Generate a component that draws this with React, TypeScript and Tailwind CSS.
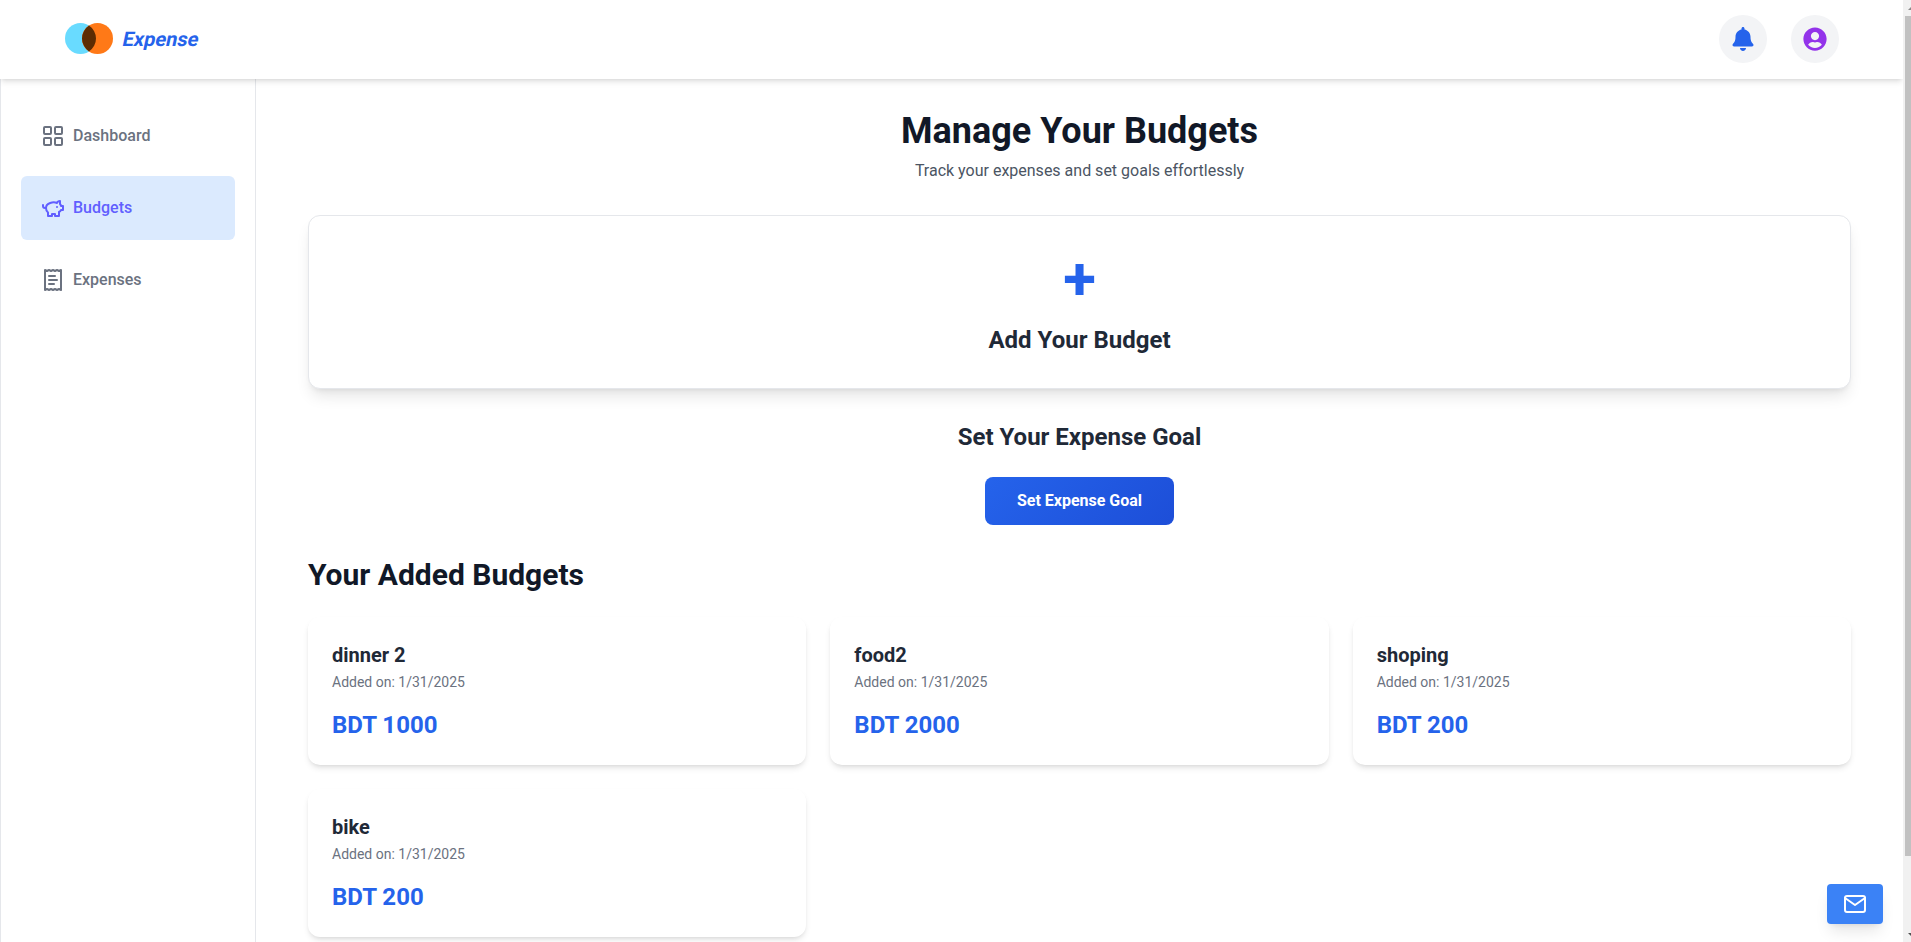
import type { ReactNode } from "react";
import { FiMail } from "react-icons/fi";
import { FaBell, FaUserCircle } from "react-icons/fa";

const budgets = [
  { name: "dinner 2", date: "1/31/2025", amount: 1000 },
  { name: "food2", date: "1/31/2025", amount: 2000 },
  { name: "shoping", date: "1/31/2025", amount: 200 },
  { name: "bike", date: "1/31/2025", amount: 200 },
];

function LineIcon({ children }: { children: ReactNode }) {
  return (
    <svg
      width="24"
      height="24"
      viewBox="0 0 24 24"
      fill="none"
      stroke="currentColor"
      strokeWidth="2"
      strokeLinecap="round"
      strokeLinejoin="round"
    >
      {children}
    </svg>
  );
}

const menu = [
  {
    label: "Dashboard",
    active: false,
    icon: (
      <LineIcon>
        <rect width="7" height="7" x="3" y="3" rx="1" />
        <rect width="7" height="7" x="14" y="3" rx="1" />
        <rect width="7" height="7" x="14" y="14" rx="1" />
        <rect width="7" height="7" x="3" y="14" rx="1" />
      </LineIcon>
    ),
  },
  {
    label: "Budgets",
    active: true,
    icon: (
      <LineIcon>
        <path d="M19 5c-1.5 0-2.8 1.4-3 2-3.5-1.5-11-.3-11 5 0 1.8 0 3 2 4.5V20h4v-2h3v2h4v-4c1-.5 1.7-1 2-2h2v-4h-2c0-1-.5-1.5-1-2V5z" />
        <path d="M2 9v1c0 1.1.9 2 2 2h1" />
        <path d="M16 11h.01" />
      </LineIcon>
    ),
  },
  {
    label: "Expenses",
    active: false,
    icon: (
      <LineIcon>
        <path d="M4 2v20l2-1 2 1 2-1 2 1 2-1 2 1 2-1 2 1V2l-2 1-2-1-2 1-2-1-2 1-2-1-2 1Z" />
        <path d="M14 8H8" />
        <path d="M16 12H8" />
        <path d="M13 16H8" />
      </LineIcon>
    ),
  },
];

function Header() {
  return (
    <header className="relative z-10 flex h-[79px] shrink-0 items-start justify-between bg-white px-16 pt-[15px] shadow-md">
      <div className="flex h-12 items-center gap-[9px]">
        <svg width="50" height="31" viewBox="0 0 50 31" className="mb-px">
          <circle cx="16.5" cy="15.5" r="15.5" fill="#69dbff" />
          <circle cx="33.5" cy="15.5" r="15.5" fill="#ff7917" />
          <path d="M25 2.54a15.5 15.5 0 0 1 0 25.92a15.5 15.5 0 0 1 0-25.92z" fill="#5d2c02" />
        </svg>
        <span className="inline-block -skew-x-12 text-xl font-bold text-[#2563eb]">Expense</span>
      </div>
      <div className="flex gap-6">
        <button className="flex size-12 items-center justify-center rounded-full bg-gray-100 text-2xl text-[#2563eb]">
          <FaBell />
        </button>
        <button className="flex size-12 items-center justify-center rounded-full bg-gray-100 text-2xl text-[#9333ea]">
          <FaUserCircle />
        </button>
      </div>
    </header>
  );
}

function Sidebar() {
  return (
    <aside className="w-64 shrink-0 border-x border-gray-200 px-5 pt-[25px]">
      <nav className="flex flex-col gap-2">
        {menu.map((item) => (
          <a
            key={item.label}
            className={
              item.active
                ? "flex h-16 items-center gap-2 rounded-md bg-blue-100 px-5 font-medium text-[#615fff]"
                : "flex h-16 items-center gap-2 rounded-md px-5 font-medium text-[#6b7280]"
            }
          >
            {item.icon}
            {item.label}
          </a>
        ))}
      </nav>
    </aside>
  );
}

export default function App() {
  return (
    <div className="flex h-[942px] overflow-hidden bg-white font-[Roboto,sans-serif]">
      <div className="relative flex min-w-0 flex-1 flex-col overflow-hidden">
        <Header />
        <div className="flex min-h-0 flex-1">
          <Sidebar />
          <main className="flex-1 px-[52px] pt-8">
            <div className="text-center">
              <h1 className="text-4xl font-bold text-[#111827]">Manage Your Budgets</h1>
              <p className="mt-2 text-[#4b5563]">Track your expenses and set goals effortlessly</p>
            </div>
            <section className="mt-8 flex flex-col items-center rounded-xl border border-gray-200 bg-white px-8 pt-[33px] pb-8 shadow-lg">
              <div className="text-6xl leading-none font-bold text-[#2563eb]">+</div>
              <h2 className="mt-[15px] text-2xl font-bold text-[#1f2937]">Add Your Budget</h2>
            </section>
            <section className="mt-8 flex flex-col items-center">
              <h2 className="text-2xl font-bold text-[#1f2937]">Set Your Expense Goal</h2>
              <button className="mt-6 h-12 rounded-lg bg-linear-135 from-[#2563eb] to-[#1d4ed8] px-8 font-bold text-white">
                Set Expense Goal
              </button>
            </section>
            <h2 className="mt-8 text-3xl font-bold text-[#111827]">Your Added Budgets</h2>
            <div className="mt-6 grid grid-cols-3 gap-6">
              {budgets.map((b) => (
                <article key={b.name} className="rounded-xl bg-white p-6 shadow-md">
                  <h3 className="text-xl font-bold text-[#1f2937]">{b.name}</h3>
                  <p className="mt-[3px] text-sm text-[#6b7280]">Added on: {b.date}</p>
                  <p className="mt-[17px] text-2xl font-bold text-[#2563eb]">BDT {b.amount}</p>
                </article>
              ))}
            </div>
          </main>
        </div>
        <button className="absolute right-5 bottom-[18px] z-20 rounded bg-[#3b82f6] px-4 py-2 text-2xl text-white shadow-lg">
          <FiMail />
        </button>
      </div>
      <div className="flex w-2 shrink-0 flex-col items-end justify-between overflow-hidden bg-[#f1f1f1]">
        <svg width="3" height="16" viewBox="0 0 3 16">
          <path d="M0 10l4-4v4z" fill="#8a8a8a" />
        </svg>
        <div className="h-[840px] w-1.5 bg-[#c1c1c1]" />
        <div className="flex-1" />
        <svg width="3" height="16" viewBox="0 0 3 16">
          <path d="M0 7h4v4z" fill="#505050" />
        </svg>
      </div>
    </div>
  );
}
